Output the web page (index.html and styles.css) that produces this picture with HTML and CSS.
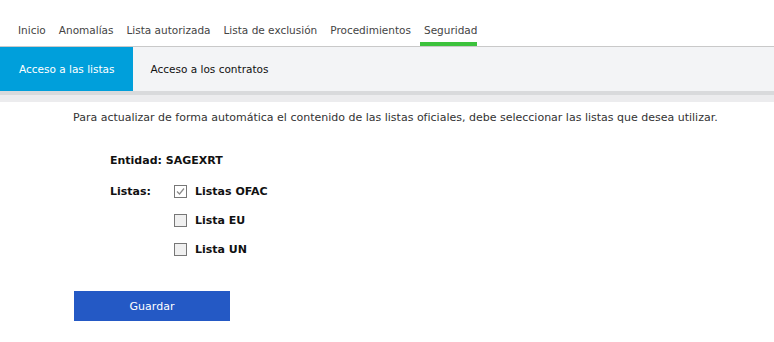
FILE: index.html
```html
<!DOCTYPE html>
<html lang="es">
<head>
    <meta charset="utf-8">
    <meta name="viewport" content="width=device-width">
    <title>Seguridad</title>
    <link rel="stylesheet" href="styles.css">
</head>
<body>
    <nav class="main-nav">
        <a href="#">Inicio</a>
        <a href="#">Anomalías</a>
        <a href="#">Lista autorizada</a>
        <a href="#">Lista de exclusión</a>
        <a href="#">Procedimientos</a>
        <a href="#" class="active">Seguridad</a>
    </nav>
    <div class="sub-nav">
        <a href="#" class="active">Acceso a las listas</a>
        <a href="#">Acceso a los contratos</a>
    </div>
    <div class="sub-shadow"></div>

    <div class="content">
        <p class="intro">Para actualizar de forma automática el contenido de las listas oficiales, debe seleccionar las listas que desea utilizar.</p>

        <div class="form">
            <div class="entity">Entidad: SAGEXRT</div>
            <div class="lists">
                <div class="lists-label">Listas:</div>
                <div class="lists-options">
                    <label class="check">
                        <span class="box checked">
                            <svg width="11" height="11" viewBox="0 0 11 11"><path d="M2 5.5 L4.5 8 L9 2.5" fill="none" stroke="#8a8a8a" stroke-width="1.2"/></svg>
                        </span>
                        Listas OFAC
                    </label>
                    <label class="check"><span class="box"></span>Lista EU</label>
                    <label class="check"><span class="box"></span>Lista UN</label>
                </div>
            </div>
        </div>

        <button class="save">Guardar</button>
    </div>
</body>
</html>
```

FILE: styles.css
```css
body {
    margin: 0;
    font-family: "DejaVu Sans", sans-serif;
    font-size: 11px;
    color: #333;
    background: #fff;
}

a {
    text-decoration: none;
    color: inherit;
}

.main-nav {
    display: flex;
    align-items: flex-end;
    gap: 13px;
    height: 46px;
    padding-left: 18px;
    border-bottom: 1px solid #c9c9c9;
    box-sizing: content-box;
    font-size: 10.5px;
}

.main-nav a {
    color: #444;
    padding-bottom: 10px;
}

.main-nav a.active {
    padding: 0 0 6px 4px;
    margin-left: -4px;
    border-bottom: 4px solid #3cc23c;
}

.sub-nav {
    display: flex;
    height: 44px;
    background: #f3f4f6;
    font-size: 10.5px;
}

.sub-nav a {
    display: flex;
    align-items: center;
    padding: 0 18px;
    color: #111;
}

.sub-nav a.active {
    background: #009fdb;
    color: #fff;
    padding-left: 19px;
}

.sub-shadow {
    height: 4px;
    background: #d9dadc;
    border-bottom: 7px solid #ececee;
}

.content {
    padding-left: 73px;
}

.intro {
    margin: 9px 0 0;
    color: #333;
}

.form {
    padding-left: 37px;
    margin-top: 30px;
    font-weight: bold;
    color: #111;
}

.entity {
    margin-bottom: 18px;
}

.lists {
    display: flex;
}

.lists-label {
    width: 64px;
}

.lists-options {
    display: flex;
    flex-direction: column;
    gap: 16px;
}

.check {
    display: flex;
    align-items: center;
    gap: 8px;
}

.box {
    display: flex;
    align-items: center;
    justify-content: center;
    width: 11px;
    height: 11px;
    border: 1px solid #777;
    background: #f0f0f0;
}

.box.checked {
    background: #fff;
}

.save {
    margin: 35px 0 0 1px;
    width: 156px;
    height: 30px;
    border: none;
    background: #2459c5;
    color: #fff;
    font-family: inherit;
    font-size: 11px;
}
```
